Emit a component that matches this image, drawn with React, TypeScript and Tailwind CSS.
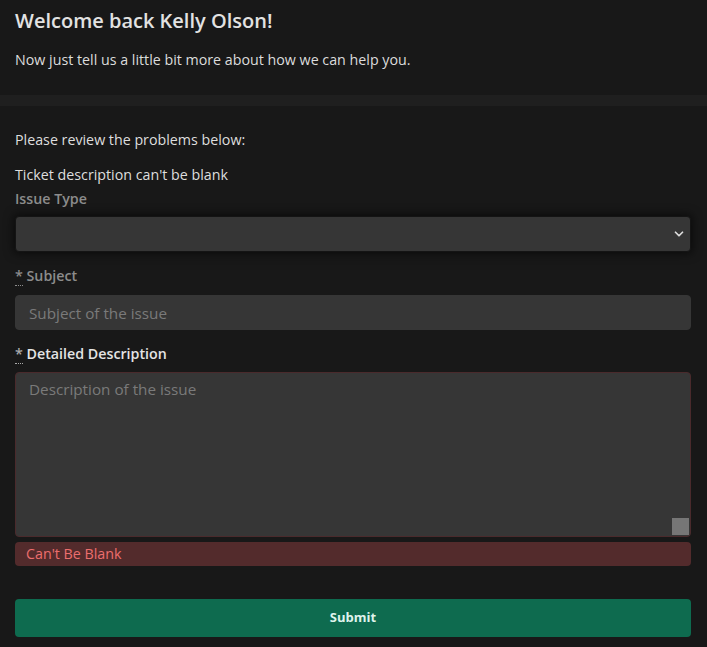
import { ChevronDown } from "lucide-react";

export default function App() {
  return (
    <div className="min-h-screen bg-[#181818] text-[#dedede] font-['Open_Sans',sans-serif]">
      {/* Header */}
      <div className="pl-[15px] pr-[16px] pt-[8px] pb-[25px]">
        <h1 className="text-[20px] font-semibold leading-[26px] text-[#e2e2e2]">Welcome back Kelly Olson!</h1>
        <p className="mt-[16px] text-[14.25px] leading-[20px] text-[#dcdcdc]">
          Now just tell us a little bit more about how we can help you.
        </p>
      </div>
      <div className="h-[11px] bg-[#1f1f1f]" />

      {/* Form */}
      <form className="pl-[15px] pr-[16px] pt-[24px] pb-[10px]" onSubmit={(e) => e.preventDefault()}>
        <p className="text-[14.25px] leading-[20px]">Please review the problems below:</p>
        <p className="mt-[15px] text-[14.25px] leading-[20px]">Ticket description can't be blank</p>

        <label className="mt-[4px] block text-[14.25px] font-semibold leading-[20px] text-[#8c8c8c]">Issue Type</label>
        <div className="relative mt-[7px]">
          <select className="h-[36px] w-full appearance-none rounded-[4px] border border-[#141414] bg-[#363636] px-3 text-[14px] text-[#ddd] shadow-[0_0_10px_2px_rgba(0,0,0,0.55)] outline-none">
            <option value=""></option>
          </select>
          <ChevronDown className="pointer-events-none absolute right-[5px] top-[11px] h-[14px] w-[14px] text-[#ddd]" strokeWidth={3} />
        </div>

        <label className="mt-[14px] block text-[14.25px] font-semibold leading-[20px] text-[#8c8c8c]">
          <abbr title="required" className="no-underline border-b border-dotted border-[#8c8c8c]">*</abbr> Subject
        </label>
        <input
          placeholder="Subject of the issue"
          className="mt-[9px] h-[35px] w-full rounded-[4px] border border-[#363636] bg-[#363636] px-[13px] text-[15.25px] text-[#ddd] outline-none placeholder:text-[#7a7a7a]"
        />

        <label className="mt-[14px] block text-[14.25px] font-semibold leading-[20px] text-[#e4e4e4]">
          <abbr title="required" className="no-underline border-b border-dotted border-[#aaa] text-[#aaa]">*</abbr> Detailed Description
        </label>
        <div className="relative mt-[8px]">
          <textarea
            placeholder="Description of the issue"
            className="block h-[165px] w-full resize-none rounded-[4px] border border-[#4a2a2c] bg-[#363636] px-[13px] py-[6px] text-[15.25px] leading-[21px] text-[#ddd] outline-none placeholder:text-[#7a7a7a]"
          />
          <span className="absolute bottom-[2px] right-[2px] h-[17px] w-[17px] bg-[#767676]" />
        </div>
        <div className="mt-[5px] h-[24px] rounded-[4px] bg-[#532b2c] px-[11px] text-[14.25px] leading-[23px] text-[#ec6e6e]">
          Can't Be Blank
        </div>

        <button
          type="submit"
          className="mt-[33px] h-[38px] w-full rounded-[4px] bg-[#0e6b4f] text-[13px] font-bold text-[#dff3ec]"
        >
          Submit
        </button>
      </form>
    </div>
  );
}
